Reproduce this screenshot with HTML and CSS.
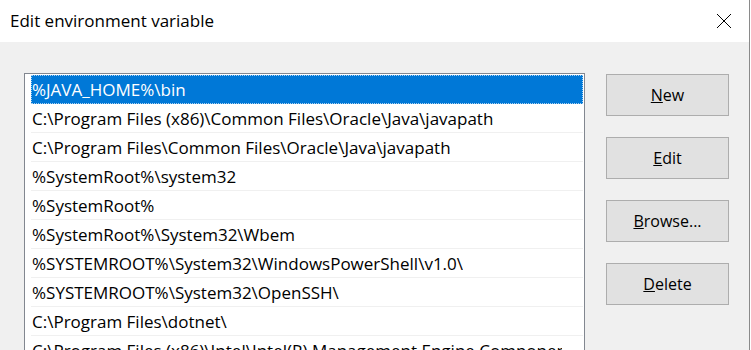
FILE: index.html
```html
<!DOCTYPE html>
<html lang="en">
<head>
    <meta charset="UTF-8">
    <title>Edit environment variable</title>
    <link rel="stylesheet" href="styles.css">
</head>
<body>

<div class="window">
    <div class="title-bar">
        <span class="title">Edit environment variable</span>
        <button class="close-btn" title="Close">
            <svg width="16" height="16" viewBox="0 0 16 16">
                <path d="M1 1 L15 15 M15 1 L1 15" stroke="#000" stroke-width="1" fill="none"/>
            </svg>
        </button>
    </div>

    <div class="dialog-body">
        <div class="path-list">
            <div class="path-item selected"><span>%JAVA_HOME%\bin</span></div>
            <div class="path-item"><span>C:\Program Files (x86)\Common Files\Oracle\Java\javapath</span></div>
            <div class="path-item"><span>C:\Program Files\Common Files\Oracle\Java\javapath</span></div>
            <div class="path-item"><span>%SystemRoot%\system32</span></div>
            <div class="path-item"><span>%SystemRoot%</span></div>
            <div class="path-item"><span>%SystemRoot%\System32\Wbem</span></div>
            <div class="path-item"><span>%SYSTEMROOT%\System32\WindowsPowerShell\v1.0\</span></div>
            <div class="path-item"><span>%SYSTEMROOT%\System32\OpenSSH\</span></div>
            <div class="path-item"><span>C:\Program Files\dotnet\</span></div>
            <div class="path-item"><span>C:\Program Files (x86)\Intel\Intel(R) Management Engine Components\DAL</span></div>
        </div>

        <div class="actions">
            <button class="action-btn"><u>N</u>ew</button>
            <button class="action-btn"><u>E</u>dit</button>
            <button class="action-btn"><u>B</u>rowse...</button>
            <button class="action-btn"><u>D</u>elete</button>
        </div>
    </div>
</div>

</body>
</html>
```

FILE: styles.css
```css
html, body {
    margin: 0;
    padding: 0;
    height: 350px;
    overflow: hidden;
    background-color: #fff;
}

body {
    font-family: 'Open Sans', 'Noto Sans', sans-serif;
    color: #000;
}

.window {
    width: 749px;
    height: 350px;
    border-right: 1px solid #8a8a8a;
    background-color: #f0f0f0;
}

.title-bar {
    height: 42px;
    background-color: #fff;
    display: flex;
    align-items: center;
    justify-content: space-between;
    padding-left: 10px;
}

.title {
    font-size: 17px;
    margin-top: -2px;
}

.close-btn {
    width: 46px;
    height: 42px;
    border: none;
    background: none;
    padding: 0;
    margin-right: 2px;
    display: flex;
    align-items: center;
    justify-content: center;
}

.dialog-body {
    display: flex;
    align-items: flex-start;
    padding: 31px 0 0 24px;
}

.path-list {
    width: 552px;
    height: 300px;
    border: 1px solid #828790;
    background-color: #fff;
    padding: 1px 1px 0 6px;
    overflow: hidden;
}

.path-item {
    height: 28px;
    border-bottom: 1px solid #f0f0f0;
    display: flex;
    align-items: center;
    padding-left: 1px;
    font-size: 17px;
    white-space: nowrap;
    overflow: hidden;
}

.path-item span {
    display: block;
    max-width: 530px;
    overflow: hidden;
}

.path-item.selected {
    background-color: #0078d7;
    color: #fff;
    outline: 1px dotted #a8d0f0;
    outline-offset: -1px;
    border-bottom-color: #0078d7;
}

.actions {
    display: flex;
    flex-direction: column;
    gap: 21px;
    margin-left: 21px;
    padding-top: 1px;
}

.action-btn {
    width: 123px;
    height: 42px;
    background-color: #e1e1e1;
    border: 1px solid #adadad;
    font-family: 'Open Sans', 'Noto Sans', sans-serif;
    font-size: 16px;
    color: #000;
    padding: 0;
}
```
